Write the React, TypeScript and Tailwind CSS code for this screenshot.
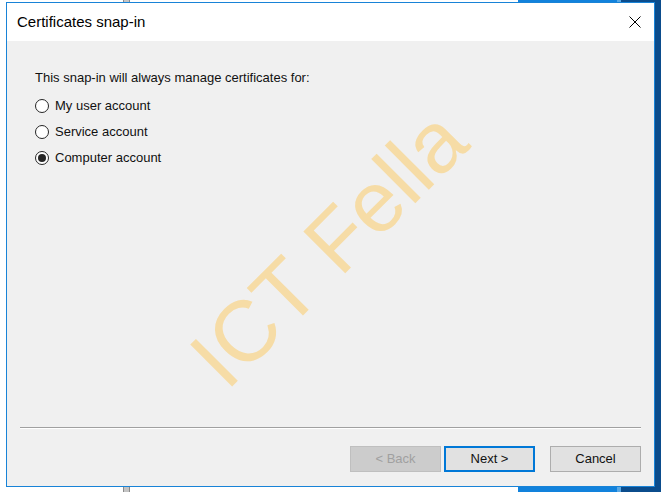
import React from "react";

function Radio({ label, checked }: { label: string; checked?: boolean }) {
  return (
    <div className="flex items-center h-4">
      <div className="w-[14px] h-[14px] rounded-full border border-[#262626] bg-white flex items-center justify-center">
        {checked && <div className="w-[8px] h-[8px] rounded-full bg-[#262626]" />}
      </div>
      <span className="ml-[6px]">{label}</span>
    </div>
  );
}

export default function App() {
  return (
    <div
      className="relative w-[661px] h-[492px] overflow-hidden bg-white text-black"
      style={{ fontFamily: '"Liberation Sans", Arial, sans-serif' }}
    >
      {/* desktop behind the dialog */}
      <div className="flex h-full">
        <div className="w-[518px] bg-white flex">
          <div className="ml-[123px] w-[7px] h-full bg-[#c4c4c4] border-x border-[#8a8a8a]" />
        </div>
        <div className="w-[99px] bg-[#1282dc]" />
        <div className="w-[4px] bg-[#5aa8e4]" />
        <div className="flex-1 bg-[#0b4c8c]" />
      </div>

      {/* dialog window */}
      <div className="absolute left-[6px] top-[2px] w-[649px] h-[485px] border border-[#1883d7] flex flex-col bg-[#f0f0f0]">
        <div className="h-[38px] bg-white flex items-center justify-between pl-[10px] pr-[13px]">
          <span className="text-[15px] leading-5">Certificates snap-in</span>
          <svg width="12" height="12" viewBox="0 0 12 12" className="-mt-[1px]">
            <path d="M0.5 0.5 L11.5 11.5 M11.5 0.5 L0.5 11.5" stroke="#000" strokeWidth="1" fill="none" />
          </svg>
        </div>

        <div className="flex-1 flex flex-col text-[13px] leading-4 text-[#111111]">
          <div className="pt-[29px] pl-[28px]">
            <p>This snap-in will always manage certificates for:</p>
            <div className="mt-[12px] flex flex-col gap-[10px]">
              <Radio label="My user account" />
              <Radio label="Service account" />
              <Radio label="Computer account" checked />
            </div>
          </div>

          <div className="flex-1" />

          <div className="mx-[13px] border-t border-b border-t-[#a0a0a0] border-b-white" />

          <div className="mt-[17px] mb-[14px] pr-[13px] flex justify-end">
            <button className="w-[91px] h-[26px] bg-[#cccccc] border border-[#bfbfbf] text-[#a0a0a0]">
              &lt; Back
            </button>
            <button className="ml-[3px] w-[91px] h-[26px] bg-[#e1e1e1] border-2 border-[#0078d7]">
              Next &gt;
            </button>
            <button className="ml-[15px] w-[91px] h-[26px] bg-[#e1e1e1] border border-[#adadad]">
              Cancel
            </button>
          </div>
        </div>
      </div>

      {/* watermark */}
      <div className="absolute left-[328px] top-[248px] pointer-events-none">
        <div className="-translate-x-1/2 -translate-y-1/2 rotate-[-45deg] whitespace-nowrap text-[86px] leading-none text-[#f6dca6]">
          ICT Fella
        </div>
      </div>
    </div>
  );
}
